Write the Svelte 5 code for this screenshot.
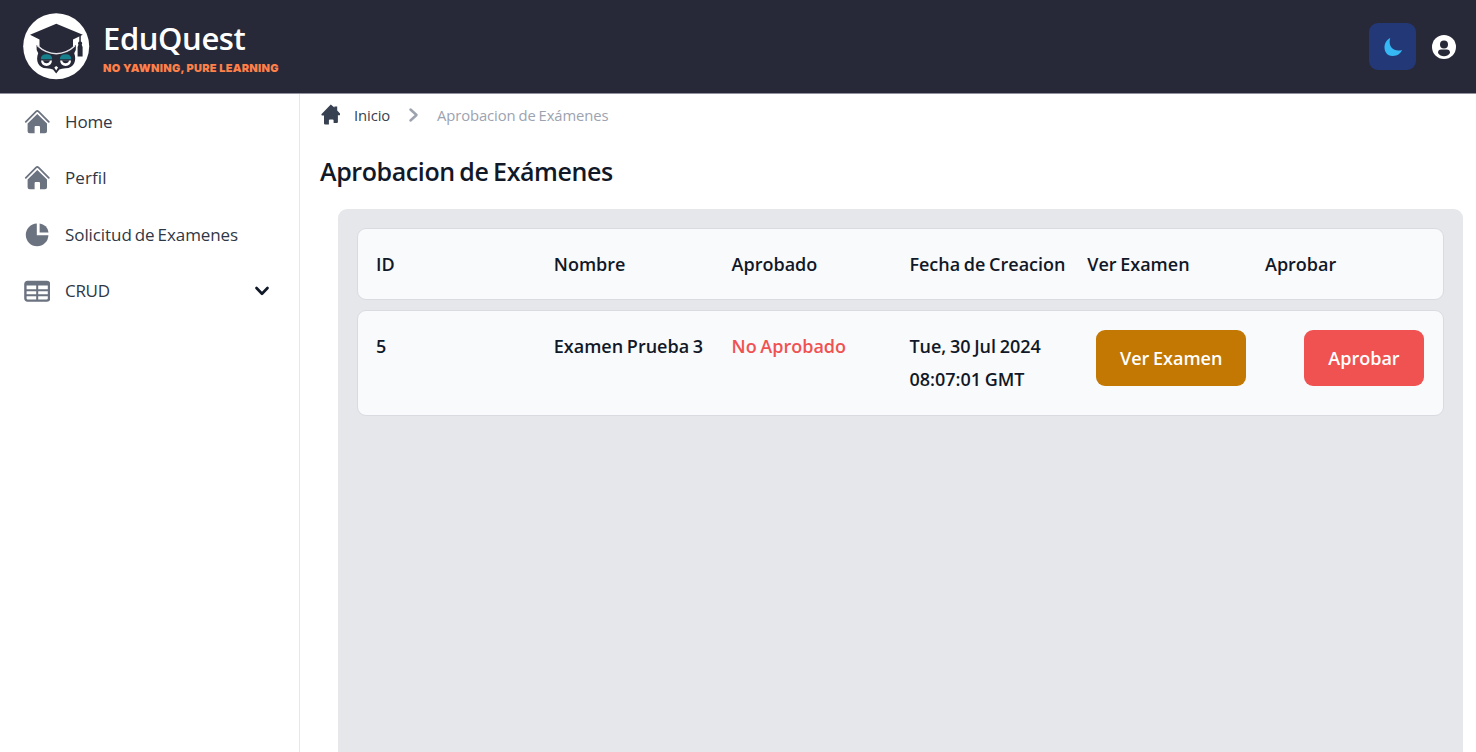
<script>
  const nav = [
    { label: 'Home', icon: 'home', ls: '-0.15px' },
    { label: 'Perfil', icon: 'home', ls: '0.1px' },
    { label: 'Solicitud de Examenes', icon: 'pie', ls: '-0.08px' },
    { label: 'CRUD', icon: 'table', ls: '-0.3px' }
  ];
  const columns = ['ID', 'Nombre', 'Aprobado', 'Fecha de Creacion', 'Ver Examen', 'Aprobar'];
</script>

<header>
  <div class="brand">
    <svg class="logo" width="68" height="68" viewBox="22 12 68 68">
      <circle cx="56.2" cy="46.3" r="33" fill="#fff" />
      <g fill="#282938">
        <path d="M56.3 23.800 82.800 34.800 73 39.500v8Q64 54 56.300 54T39.500 47v-7.600L30 34.800Z" />
        <path d="M36.500 45Q45 53.500 56.300 53.500T76 45Q76.500 50 74.200 53.200C76.800 60 74.500 68 65.600 68.300Q61.500 68.500 59.300 69.500L56.200 73.400 53 69.500Q51 68.500 46.500 68.300C37.800 68 35.500 60 38.200 53.200Q36 50 36.500 45Z" />
        <path d="M79.300 35h1.500v6.500a2 2 0 0 1 .9 3.200l.9 2.300v9.500h-5v-9.500l.9-2.300a2 2 0 0 1 .8-3.200Z" />
      </g>
      <path d="M37.500 45.800Q46 53.700 56.300 53.700T75 45.800" fill="none" stroke="#e4e4e8" stroke-width="1.500" />
      <path d="M40.800 59.200q0-5 5.700-5t5.700 5ZM59.900 59.200q0-5 5.700-5t5.700 5Z" fill="#16808d" />
      <path d="M41 60.600h11q-.5 5.400-5.500 5.400T41 60.600ZM60.100 60.600h11q-.5 5.400-5.500 5.400t-5.500-5.400Z" fill="#fff" />
      <path d="M43 60.300h7q-.5 3-3.500 3t-3.500-3ZM62.100 60.300h7q-.5 3-3.500 3t-3.500-3Z" fill="#282938" />
      <path d="m54.300 67.500 1.900-1.500 1.900 1.500-1.900 3Z" fill="#fff" />
    </svg>
    <div class="brandtext">
      <div class="name">EduQuest</div>
      <div class="tag">NO YAWNING, PURE LEARNING</div>
    </div>
  </div>
  <div class="tools">
    <button class="theme" aria-label="Tema">
      <svg width="20" height="20" viewBox="0 0 20 20"><path d="M7.200 1C-1 5-.5 18.500 9.500 19c5 .1 8.300-2.800 9.500-6C10 15.500 4.800 9 7.200 1Z" fill="#36b8f5" /></svg>
    </button>
    <svg width="24" height="24" viewBox="0 0 24 24">
      <circle cx="12" cy="12" r="12" fill="#fff" />
      <circle cx="12" cy="9.500" r="4" fill="#282938" />
      <path d="M6 18q0-3.400 3.200-3.400h5.600q3.200 0 3.200 3.400-2.300 3.300-6 3.300t-6-3.300Z" fill="#282938" />
    </svg>
  </div>
</header>

<div class="body">
  <nav>
    {#each nav as item}
      <a href="#top" class="item">
        {#if item.icon === 'home'}
          <svg width="26" height="26" viewBox="0 0 26 26">
            <path d="M1.800 12.800 12.200 2.400q1.100-.9 2.200 0L24.800 12.800" fill="none" stroke="#6b7280" stroke-width="1.800" stroke-linecap="round" />
            <path d="M13.300 5 23 14.500V22.200a2 2 0 0 1-2 2H16V18a1 1 0 0 0-1-1h-3.400a1 1 0 0 0-1 1v6.200H5.600a2 2 0 0 1-2-2V14.500Z" fill="#6b7280" />
          </svg>
        {:else if item.icon === 'pie'}
          <svg width="26" height="26" viewBox="0 0 26 26" fill="#6b7280">
            <path d="M12.800 1.600V13.200H24.400A11.300 11.300 0 1 1 12.800 1.600Z" />
            <path d="M15.600 1.500A10 10 0 0 1 24.500 10.400H15.600Z" />
          </svg>
        {:else}
          <svg width="26" height="26" viewBox="0 0 26 26" fill="none" stroke="#6b7280">
            <rect x="1.400" y="4" width="23.600" height="18.600" rx="2" stroke-width="2.400" />
            <path d="M1 5.800h24" stroke-width="3.400" />
            <path d="M1 12.200h24M1 17.300h24M13.200 4v18" stroke-width="2" />
          </svg>
        {/if}
        <span class="label" style:letter-spacing={item.ls}>{item.label}</span>
        {#if item.icon === 'table'}
          <svg class="chev" width="16" height="12" viewBox="0 0 16 12"><path d="m2.500 3 5.500 5.700L13.500 3" fill="none" stroke="#111827" stroke-width="2.700" stroke-linecap="round" stroke-linejoin="round" /></svg>
        {/if}
      </a>
    {/each}
  </nav>

  <main>
    <div class="crumbs">
      <svg width="20" height="22" viewBox="0 0 20 22"><path d="M10.800.6 14.400 3.600V2.500h2.800v3.900l3 3.400q.4 1.200-.7 1.400h-1.600v6.700q0 1-1 1h-3.300v-2.300q0-1-1-1h-2.700q-1 0-1 1V20.600H5.200q-1.200 0-1.200-1v-8.100H2.200Q1 11.200 1.600 10Z" fill="#374151" /></svg>
      <span class="inicio">Inicio</span>
      <svg class="sep" width="12" height="16" viewBox="0 0 12 16"><path d="m2.500 2.500 6 5.500-6 5.500" fill="none" stroke="#9ca3af" stroke-width="2.500" stroke-linecap="round" stroke-linejoin="round" /></svg>
      <span class="current">Aprobacion de Exámenes</span>
    </div>
    <h1>Aprobacion de Exámenes</h1>
    <section>
      <div class="row head">
        {#each columns as c}<div>{c}</div>{/each}
      </div>
      <div class="row data">
        <div>5</div>
        <div class="exam">Examen Prueba 3</div>
        <div class="no">No Aprobado</div>
        <div>Tue, 30 Jul 2024<br />08:07:01 GMT</div>
        <div><button class="view">Ver Examen</button></div>
        <div class="end"><button class="approve">Aprobar</button></div>
      </div>
    </section>
  </main>
</div>

<style>
  :global(body) { background: #fff; overflow: hidden; }
  :global(*) { box-sizing: border-box; }
  :global(#app) { height: 752px; display: flex; flex-direction: column; font-family: "Open Sans", "Noto Sans", sans-serif; color: #111827; }
  header { height: 94px; flex: none; background: #282938; border-bottom: 1px solid #8f929d; display: flex; justify-content: space-between; padding: 0 20px 0 22px; }
  .brand { display: flex; padding-top: 12px; gap: 13px; }
  .name { font-size: 31px; line-height: 36px; font-weight: 650; color: #fff; padding-top: 8px; white-space: nowrap; letter-spacing: -0.4px; }
  .tag { font-family: Inter, sans-serif; font-weight: 900; font-size: 11px; line-height: 14px; margin-top: 5px; color: #ff8049; white-space: nowrap; letter-spacing: 0.25px; }
  .tools { display: flex; align-items: center; gap: 16px; }
  button { font-family: inherit; border: 0; padding: 0; }
  .theme { width: 47px; height: 47px; border-radius: 9px; background: #233876; display: grid; place-items: center; }
  .body { flex: 1; display: flex; min-height: 0; }
  nav { width: 300px; border-right: 1px solid #e5e7eb; display: flex; flex-direction: column; gap: 9.500px; padding: 4px 14px 0; flex: none; }
  .item { height: 47px; display: flex; align-items: center; padding: 0 15px 0 10px; gap: 15px; color: #2f3745; text-decoration: none; font-size: 17px; word-spacing: -1.300px; white-space: nowrap; }
  .label { padding-bottom: 1px; }
  .chev { margin-left: auto; }
  main { flex: 1; padding: 0 13px 0 20px; display: flex; flex-direction: column; min-width: 0; }
  .crumbs { height: 42px; display: flex; align-items: center; font-size: 14.800px; letter-spacing: -0.1px; word-spacing: -0.800px; white-space: nowrap; }
  .inicio { margin: 0 18px 0 14px; color: #374151; }
  .sep { margin-right: 17px; }
  .current { color: #9ca3af; }
  h1 { margin: 16px 0 0; height: 38px; line-height: 38px; font-size: 25px; font-weight: 600; letter-spacing: -0.400px; word-spacing: -1.500px; white-space: nowrap; }
  section { margin: 19px 0 0 18px; flex: 1; background: #e5e7eb; border-radius: 9px 9px 0 0; padding: 19px; }
  .row { display: grid; grid-template-columns: repeat(6, minmax(0, 1fr)); column-gap: 18.800px; background: #f9fafb; border: 1px solid #d9dbe1; border-radius: 9px; padding: 19px 19px 19px 18px; font-size: 18px; font-weight: 600; line-height: 33px; word-spacing: -1px; white-space: nowrap; }
  .head { height: 72px; margin-bottom: 10px; }
  .data { height: 106px; }
  .no { color: #f05252; }
  .end { display: flex; justify-content: flex-end; }
  .view, .approve { height: 56px; border-radius: 9px; color: #fff; font-size: 18px; font-weight: 600; word-spacing: -1px; }
  .view { width: 150px; margin-left: 9px; background: #c27803; display: block; }
  .approve { width: 120px; background: #f05252; }
</style>
